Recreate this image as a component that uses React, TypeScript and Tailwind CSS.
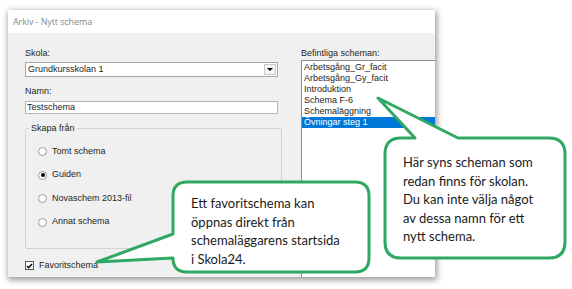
const schemas = [
  'Arbetsgång_Gr_facit',
  'Arbetsgång_Gy_facit',
  'Introduktion',
  'Schema F-6',
  'Schemaläggning',
  'Övningar steg 1',
]

const sources = [
  { label: 'Tomt schema', checked: false },
  { label: 'Guiden', checked: true },
  { label: 'Novaschem 2013-fil', checked: false },
  { label: 'Annat schema', checked: false },
]

function Radio({ checked }: { checked: boolean }) {
  return (
    <span className="flex h-[9px] w-[9px] items-center justify-center rounded-full border border-[#9a9a9a] bg-white">
      {checked && <span className="h-[4px] w-[4px] rounded-full bg-black" />}
    </span>
  )
}

export default function App() {
  return (
    <div className="relative h-[289px] w-[572px] overflow-hidden bg-white pl-[8px] pt-[10px] font-['Liberation_Sans',Arial,sans-serif] text-[9px] text-[#1e1e1e]">
      {/* Dialog */}
      <div className="flex h-[267px] w-[427px] flex-col overflow-hidden shadow-[1px_2px_6px_1px_rgba(0,0,0,0.4)]">
        <div className="flex h-[23px] shrink-0 items-center bg-white pl-[5px] font-['Open_Sans',sans-serif] text-[9px] tracking-[-0.1px] text-[#8a8a8a]">
          Arkiv - Nytt schema
        </div>
        <div className="flex min-h-0 flex-1 bg-[#f0f0f0] pl-[17px] pt-[14px]">
          {/* Left column */}
          <div className="flex w-[257px] flex-col">
            <div className="h-[12px] leading-[12px]">Skola:</div>
            <div className="mt-[3px] flex h-[15px] w-[253px] items-center justify-between border border-[#a5a5a5] bg-white pl-[2px] pr-[1px]">
              <span>Grundkursskolan 1</span>
              <span className="flex h-[11px] w-[12px] items-center justify-center border border-[#c8c8c8] bg-[#f4f4f4]">
                <svg width="6" height="3" viewBox="0 0 6 3">
                  <path d="M0 0H6L3 3Z" fill="#000" />
                </svg>
              </span>
            </div>
            <div className="mt-[8px] h-[12px] leading-[12px]">Namn:</div>
            <div className="mt-[4px] flex h-[13px] w-[253px] items-center border border-[#b5b5b5] bg-white pl-[1px]">
              Testschema
            </div>
            <fieldset className="mt-[8px] h-[127px] w-[257px] rounded-[2px] border border-[#d2d2d2]">
              <legend className="ml-[3px] px-[2px] leading-[12px]">Skapa från</legend>
              <div className="mt-[13px] flex flex-col gap-[14.5px] pl-[12px]">
                {sources.map((s) => (
                  <div key={s.label} className="flex h-[9px] items-center gap-[5px]">
                    <Radio checked={s.checked} />
                    <span>{s.label}</span>
                  </div>
                ))}
              </div>
            </fieldset>
            <div className="mt-[10px] flex items-center gap-[5px]">
              <span className="flex h-[9px] w-[9px] items-center justify-center border border-[#555] bg-white">
                <svg width="7" height="6" viewBox="0 0 7 6">
                  <path d="M1 3L2.7 4.8L6 1" fill="none" stroke="#000" strokeWidth="1.4" />
                </svg>
              </span>
              <span>Favoritschema</span>
            </div>
          </div>

          {/* Right column */}
          <div className="ml-[19px] flex min-w-0 flex-1 flex-col">
            <div className="h-[12px] leading-[12px]">Befintliga scheman:</div>
            <div className="mt-[1px] w-[160px] flex-1 border border-b-0 border-[#8d8d8d] bg-white pt-[1px]">
              {schemas.map((name, i) => (
                <div
                  key={name}
                  className={
                    i === schemas.length - 1
                      ? 'h-[11px] bg-[#0078d7] pl-[2px] leading-[11px] text-white'
                      : 'h-[11px] pl-[2px] leading-[11px]'
                  }
                >
                  {name}
                </div>
              ))}
            </div>
          </div>
        </div>
      </div>

      {/* Callout bubbles */}
      <svg className="pointer-events-none absolute left-0 top-0" width="572" height="289" viewBox="0 0 572 289">
        <path
          d="M187 182H355Q369 182 369 196V258Q369 272 355 272H187Q173 272 173 258L97 262L173 234V196Q173 182 187 182Z"
          fill="#fff"
          stroke="#2ea862"
          strokeWidth="3"
          strokeLinejoin="round"
        />
        <path
          d="M401 138H415L378 98L458 138H549Q565 138 565 154V242Q565 258 549 258H401Q385 258 385 242V154Q385 138 401 138Z"
          fill="#fff"
          stroke="#2ea862"
          strokeWidth="3"
          strokeLinejoin="round"
        />
      </svg>
      <div className="absolute left-[191px] top-[194px] font-['Lato',sans-serif] text-[13px] leading-[18.5px] text-[#1a1a1a]">
        Ett favoritschema kan
        <br />
        öppnas direkt från
        <br />
        schemaläggarens startsida
        <br />i Skola24.
      </div>
      <div className="absolute left-[403px] top-[153px] font-['Lato',sans-serif] text-[13px] leading-[18.5px] text-[#1a1a1a]">
        Här syns scheman som
        <br />
        redan finns för skolan.
        <br />
        Du kan inte välja något
        <br />
        av dessa namn för ett
        <br />
        nytt schema.
      </div>
    </div>
  )
}
